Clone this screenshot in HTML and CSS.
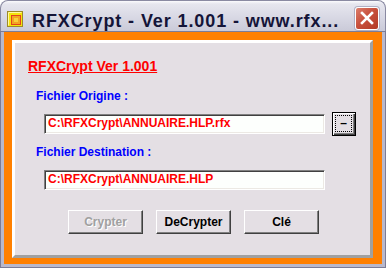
FILE: index.html
```html
<!DOCTYPE html>
<head>
    <title>RFXCrypt</title>
    <link rel="stylesheet" href="styles.css">
</head>
<body>
    <div class="window">
        <div class="titlebar">
            <svg class="app-icon" width="16" height="16" viewBox="0 0 16 16">
                <rect x="0.5" y="0.5" width="15" height="15" fill="#f4e40c" stroke="#9c8a2a"/>
                <path d="M1.5 14.5V1.5H14.5" fill="none" stroke="#fff8a0"/>
                <rect x="4.5" y="4.5" width="9" height="9" fill="#f2a424" stroke="#e2441c"/>
                <rect x="7" y="7" width="4" height="4" fill="#f8d23c"/>
            </svg>
            <span class="title">RFXCrypt - Ver 1.001 - www.rfx...</span>
            <span class="close">
                <svg width="22" height="21" viewBox="0 0 22 21">
                    <path d="M6 5L16 15M16 5L6 15" stroke="#fff" stroke-width="2.6" stroke-linecap="square"/>
                </svg>
            </span>
        </div>
        <div class="frame">
            <div class="client">
                <div class="panel">
                    <div class="heading">RFXCrypt Ver 1.001</div>

                    <div class="label">Fichier Origine :</div>
                    <div class="field-row">
                        <div class="field">C:\RFXCrypt\ANNUAIRE.HLP.rfx</div>
                        <button class="browse"><span class="focus">&ndash;</span></button>
                    </div>

                    <div class="label second">Fichier Destination :</div>
                    <div class="field-row single">
                        <div class="field">C:\RFXCrypt\ANNUAIRE.HLP</div>
                    </div>

                    <div class="buttons">
                        <button class="btn" disabled>Crypter</button>
                        <button class="btn">DeCrypter</button>
                        <button class="btn">Clé</button>
                    </div>
                </div>
            </div>
        </div>
    </div>
</body>
</html>
```

FILE: styles.css
```css
body {
    margin: 0;
    background-color: #ffffff;
    font-family: "Liberation Sans", Arial, sans-serif;
}
.window {
    width: 386px;
    height: 268px;
    display: flex;
    flex-direction: column;
}
.titlebar {
    height: 31px;
    box-sizing: border-box;
    display: flex;
    align-items: flex-start;
    padding: 10px 0 0 7px;
    border: 1px solid #8a8aa2;
    border-bottom: none;
    border-radius: 8px 8px 0 0;
    background: linear-gradient(#fbfbfd 0, #e6e6ee 3px, #d8d8e4 55%, #cacad8 100%);
}
.app-icon {
    flex: none;
    margin-left: -1px;
}
.title {
    margin-left: 9px;
    font-size: 18px;
    line-height: 20px;
    font-weight: bold;
    letter-spacing: 0.9px;
    color: #141438;
    white-space: nowrap;
}
.close {
    margin: -4px 6px 0 auto;
    flex: none;
    width: 24px;
    height: 23px;
    box-sizing: border-box;
    border: 1px solid #ffffff;
    border-radius: 3px;
    background: linear-gradient(135deg, #dc7e6c 0, #c8503c 45%, #b23a26 100%);
    display: flex;
    align-items: center;
    justify-content: center;
    box-shadow: 0 0 0 1px #b0b0c4;
}
.frame {
    flex: 1;
    display: flex;
    border: 4px solid #b8b8cc;
    border-top: none;
    box-shadow: inset 1px 0 0 #d4d4e2, inset -1px -1px 0 #d4d4e2;
    outline: 1px solid #7c7c96;
    outline-offset: -1px;
}
.client {
    flex: 1;
    display: flex;
    padding: 9px 9px 6px 8px;
    background-color: #ff8000;
}
.panel {
    flex: 1;
    border: 3px solid;
    border-color: #ffffff #a0a0a0 #a0a0a0 #ffffff;
    background-color: #e4dfe4;
    display: flex;
    flex-direction: column;
}
.heading {
    margin: 15px 0 0 13px;
    font-size: 14px;
    line-height: 16px;
    font-weight: bold;
    color: #ff0000;
    text-decoration: underline;
}
.label {
    margin: 15px 0 0 21px;
    font-size: 12px;
    line-height: 14px;
    font-weight: bold;
    color: #0000ff;
}
.label.second {
    margin-top: 9px;
}
.field-row {
    margin: 9px 0 0 29px;
    display: flex;
    align-items: center;
    gap: 7px;
    height: 24px;
}
.field-row.single {
    margin-top: 11px;
    height: 20px;
}
.field {
    width: 281px;
    height: 20px;
    box-sizing: border-box;
    padding-left: 3px;
    border: 1px solid;
    border-color: #808080 #ffffff #ffffff #808080;
    box-shadow: inset 1px 1px 0 #404040, inset -1px -1px 0 #ece9e4;
    background-color: #fdfffd;
    font-size: 12px;
    line-height: 17px;
    font-weight: bold;
    color: #ff0000;
}
.browse {
    width: 24px;
    height: 24px;
    padding: 0;
    border: 1px solid #000000;
    background-color: #e4dfe4;
    box-shadow: inset 1px 1px 0 #ffffff, inset -1px -1px 0 #404040, inset -2px -2px 0 #808080;
    display: flex;
    align-items: center;
    justify-content: center;
    font-family: "Liberation Sans", Arial, sans-serif;
}
.focus {
    width: 17px;
    height: 17px;
    box-sizing: border-box;
    border: 1px dotted #000000;
    font-size: 12px;
    line-height: 14px;
    font-weight: bold;
    color: #000000;
    text-align: center;
    margin: -1px 0 0 -1px;
}
.buttons {
    margin: 20px 0 0 53px;
    display: flex;
    gap: 13px;
}
.btn {
    width: 75px;
    height: 24px;
    padding: 0;
    border: 1px solid;
    border-color: #ffffff #404040 #404040 #ffffff;
    box-shadow: inset -1px -1px 0 #808080;
    background-color: #e4dfe4;
    font-family: "Liberation Sans", Arial, sans-serif;
    font-size: 12px;
    font-weight: bold;
    color: #000000;
}
.btn:disabled {
    color: #a0a0a0;
    text-shadow: 1px 1px 0 #ffffff;
}
```
